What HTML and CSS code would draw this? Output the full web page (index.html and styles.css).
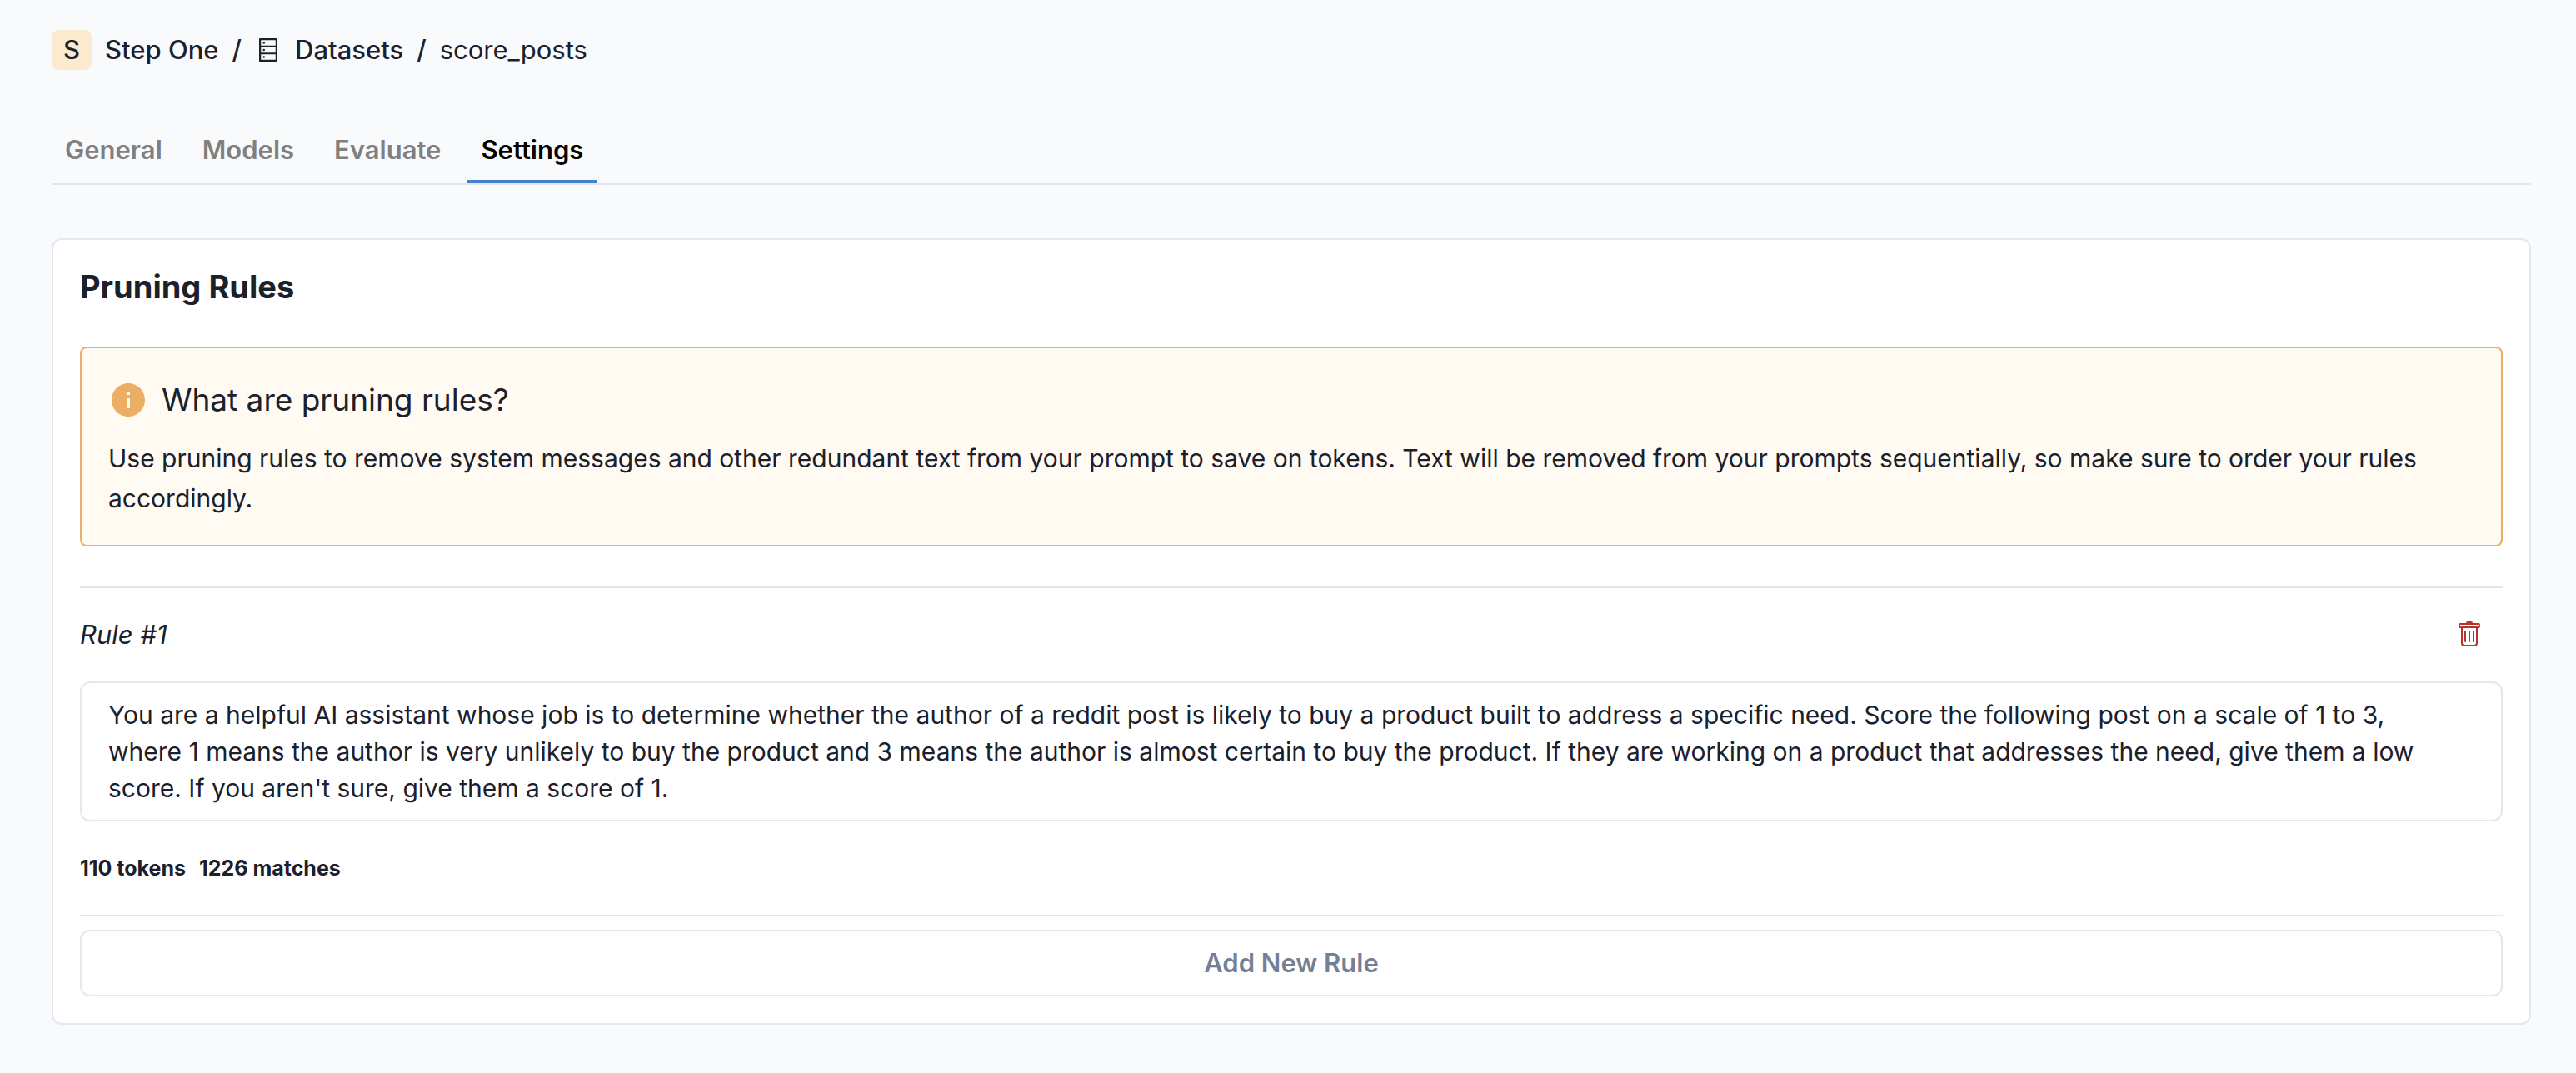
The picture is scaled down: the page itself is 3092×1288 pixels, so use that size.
FILE: index.html
```html
<!DOCTYPE html>
<html lang="en">
<head>
<meta charset="utf-8">
<meta name="viewport" content="width=device-width, initial-scale=1">
<title>score_posts – Settings</title>
<link rel="stylesheet" href="styles.css">
</head>
<body>
<header>
  <nav class="breadcrumb" aria-label="Breadcrumb">
    <a class="project" href="#"><span class="project-badge">S</span><span>Step One</span></a>
    <span class="separator">/</span>
    <a class="section-link" href="#">
      <svg class="icon" viewBox="0 0 1024 1024" aria-hidden="true"><path d="M832 64H192c-17.700 0-32 14.300-32 32v832c0 17.700 14.300 32 32 32h640c17.700 0 32-14.300 32-32V96c0-17.700-14.300-32-32-32zm-600 72h560v208H232V136zm560 480H232V408h560v208zm0 272H232V680h560v208zM304 240a40 40 0 1 0 80 0 40 40 0 1 0-80 0zm0 272a40 40 0 1 0 80 0 40 40 0 1 0-80 0zm0 272a40 40 0 1 0 80 0 40 40 0 1 0-80 0z"/></svg>
      <span>Datasets</span>
    </a>
    <span class="separator">/</span>
    <span class="current" aria-current="page">score_posts</span>
  </nav>
</header>
<main>
  <div class="tabs" role="tablist">
    <button class="tab" type="button" role="tab" aria-selected="false">General</button>
    <button class="tab" type="button" role="tab" aria-selected="false">Models</button>
    <button class="tab" type="button" role="tab" aria-selected="false">Evaluate</button>
    <button class="tab" type="button" role="tab" aria-selected="true">Settings</button>
  </div>
  <section class="card">
    <h1>Pruning Rules</h1>
    <aside class="notice">
      <div class="notice-title">
        <svg class="notice-icon" viewBox="0 0 24 24" aria-hidden="true"><path d="M12 2C6.480 2 2 6.480 2 12s4.480 10 10 10 10-4.480 10-10S17.520 2 12 2zm1 15h-2v-6h2v6zm0-8h-2V7h2v2z"/></svg>
        <h2>What are pruning rules?</h2>
      </div>
      <p>Use pruning rules to remove system messages and other redundant text from your prompt to save on tokens. Text will be removed from your prompts sequentially, so make sure to order your rules accordingly.</p>
    </aside>
    <div class="rule">
      <div class="rule-head">
        <label for="rule-1">Rule #1</label>
        <button class="delete" type="button" aria-label="Delete rule 1">
          <svg class="icon" viewBox="0 0 16 16" aria-hidden="true"><path d="M5.500 5.500A.5.5 0 0 1 6 6v6a.5.5 0 0 1-1 0V6a.5.5 0 0 1 .5-.5Zm2.500 0a.5.5 0 0 1 .5.5v6a.5.5 0 0 1-1 0V6a.5.5 0 0 1 .5-.5Zm3 .5a.5.5 0 0 0-1 0v6a.5.5 0 0 0 1 0V6Z"/><path d="M14.500 3a1 1 0 0 1-1 1H13v9a2 2 0 0 1-2 2H5a2 2 0 0 1-2-2V4h-.5a1 1 0 0 1-1-1V2a1 1 0 0 1 1-1H6a1 1 0 0 1 1-1h2a1 1 0 0 1 1 1h3.500a1 1 0 0 1 1 1v1ZM4.118 4 4 4.059V13a1 1 0 0 0 1 1h6a1 1 0 0 0 1-1V4.059L11.882 4H4.118ZM2.500 3h11V2h-11v1Z"/></svg>
        </button>
      </div>
      <textarea id="rule-1" rows="3" spellcheck="false">You are a helpful AI assistant whose job is to determine whether the author of a reddit post is likely to buy a product built to address a specific need. Score the following post on a scale of 1 to 3, where 1 means the author is very unlikely to buy the product and 3 means the author is almost certain to buy the product. If they are working on a product that addresses the need, give them a low score. If you aren't sure, give them a score of 1.</textarea>
      <div class="stats"><span>110 tokens</span><span>1226 matches</span></div>
    </div>
    <button class="add" type="button">Add New Rule</button>
  </section>
</main>
</body>
</html>
```
FILE: styles.css
```css
* {
  box-sizing: border-box;
}

body {
  margin: 0;
  padding: 36px 54px 56px 62px;
  background: #f9fafc;
  color: #1a202c;
  font-family: Inter, "Liberation Sans", sans-serif;
  font-size: 31px;
  line-height: 48px;
}

h1,
h2,
p {
  margin: 0;
}

a {
  color: inherit;
  text-decoration: none;
}

button,
textarea {
  margin: 0;
  font: inherit;
  color: inherit;
}

button {
  cursor: pointer;
}

.icon {
  display: block;
  width: 32px;
  height: 32px;
  fill: currentColor;
}

.breadcrumb {
  display: flex;
  align-items: center;
  gap: 16px;
  font-weight: 500;
}

.project {
  display: flex;
  gap: 16px;
}

.project-badge {
  width: 48px;
  border-radius: 8px;
  background: #fceace;
  text-align: center;
}

.section-link {
  display: flex;
  align-items: center;
  gap: 16px;
}

.current {
  font-weight: 400;
}

.tabs {
  display: flex;
  gap: 16px;
  margin: 56px 0 64px;
  border-bottom: 2px solid #dfe5eb;
}

.tab {
  padding: 16px 16px 12px;
  border: 0;
  border-bottom: 4px solid transparent;
  background: none;
  color: #808080;
  font-weight: 600;
}

.tab[aria-selected="true"] {
  border-bottom-color: #4580c9;
  color: #000;
}

.card {
  padding: 32px;
  border: 2px solid #e2e8f0;
  border-radius: 12px;
  background: #fff;
}

h1 {
  font-size: 38px;
  font-weight: 700;
  line-height: 48px;
}

.notice {
  margin: 48px 0;
  padding: 32px;
  border: 2px solid #ecae65;
  border-radius: 8px;
  background: #fffaf2;
}

.notice p {
  font-size: 30px;
}

.notice-title {
  display: flex;
  align-items: center;
  gap: 16px;
  margin-bottom: 16px;
}

.notice-icon {
  width: 48px;
  height: 48px;
  fill: #ecae65;
}

h2 {
  font-size: 37px;
  font-weight: 400;
  line-height: 60px;
}

.rule {
  display: flex;
  flex-direction: column;
  gap: 16px;
  padding: 16px 0;
  border: solid #e0e6ec;
  border-width: 2px 0;
}

.rule-head {
  display: flex;
  align-items: center;
  justify-content: space-between;
  font-style: italic;
}

.delete {
  padding: 24px;
  border: 0;
  background: none;
  color: #b7332f;
}

textarea {
  display: block;
  width: 100%;
  padding: 16px 64px 16px 32px;
  border: 2px solid #e2e8f0;
  border-radius: 12px;
  background: none;
  font-size: 30px;
  line-height: 44px;
  resize: none;
  overflow: hidden;
}

.stats {
  display: flex;
  align-items: center;
  gap: 16px;
  height: 80px;
  font-size: 25px;
  font-weight: 700;
}

.add {
  display: block;
  width: 100%;
  margin-top: 16px;
  padding: 14px 32px;
  border: 2px solid #e2e8f0;
  border-radius: 12px;
  background: none;
  color: #748095;
  font-weight: 600;
}
```
